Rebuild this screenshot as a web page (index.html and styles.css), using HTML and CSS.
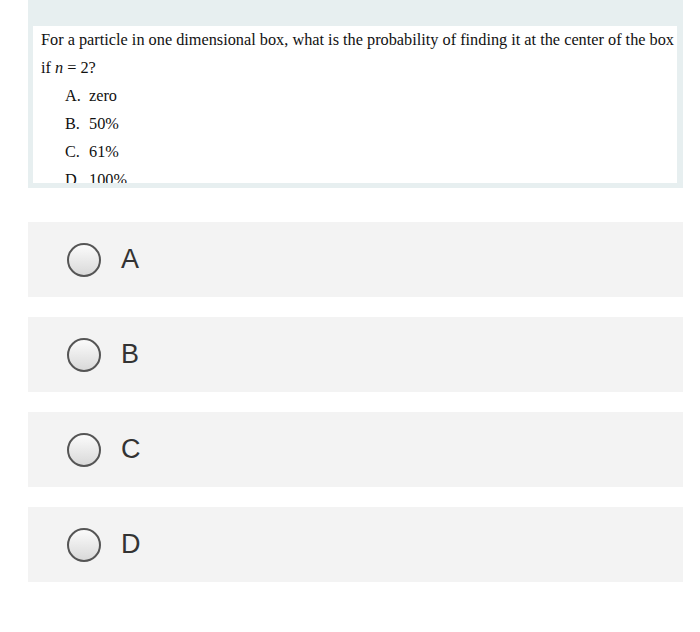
FILE: index.html
```html
<!DOCTYPE html>
<html>
<head>
<meta charset="utf-8">
<link rel="stylesheet" href="styles.css">
</head>
<body>
<div class="panel">
  <div class="question">
    <p class="stem"><span class="line">For a particle in one dimensional box, what is the probability of finding it at the center of the box</span><br>if <i>n</i> = 2?</p>
    <ol class="choices">
      <li><span class="lbl">A.</span>zero</li>
      <li><span class="lbl">B.</span>50%</li>
      <li><span class="lbl">C.</span>61%</li>
      <li><span class="lbl">D.</span>100%</li>
    </ol>
  </div>
</div>
<div class="answers">
  <label class="answer"><span class="radio"></span><span class="letter">A</span></label>
  <label class="answer"><span class="radio"></span><span class="letter">B</span></label>
  <label class="answer"><span class="radio"></span><span class="letter">C</span></label>
  <label class="answer"><span class="radio"></span><span class="letter">D</span></label>
</div>
</body>
</html>
```
FILE: styles.css
```css
html, body {
  margin: 0;
  padding: 0;
  background: #ffffff;
}
body {
  font-family: "Liberation Sans", Arial, sans-serif;
}
.panel {
  margin: 0 17px 0 28px;
  padding: 26px 6px 5px 5px;
  background: #e7eff0;
}
.question {
  background: #ffffff;
  height: 157px;
  overflow: hidden;
  padding: 0 2px 0 8px;
  box-sizing: border-box;
  font-family: "Liberation Serif", "Times New Roman", serif;
  font-size: 16.3px;
  line-height: 28px;
  color: #111;
}
.stem {
  margin: 0;
}
.line {
  white-space: nowrap;
}
.choices {
  list-style: none;
  margin: 0;
  padding: 0 0 0 24px;
}
.lbl {
  display: inline-block;
  width: 24px;
}
.answers {
  margin: 34px 17px 0 28px;
  display: flex;
  flex-direction: column;
  gap: 20px;
}
.answer {
  height: 75px;
  background: #f3f3f3;
  display: flex;
  align-items: center;
  padding-left: 39px;
  gap: 20px;
}
.radio {
  width: 30px;
  height: 30px;
  border: 2px solid #555;
  border-radius: 50%;
  background: linear-gradient(#fbfbfb, #d9d9d9);
  flex: none;
}
.letter {
  font-size: 27px;
  color: #333;
}
```
